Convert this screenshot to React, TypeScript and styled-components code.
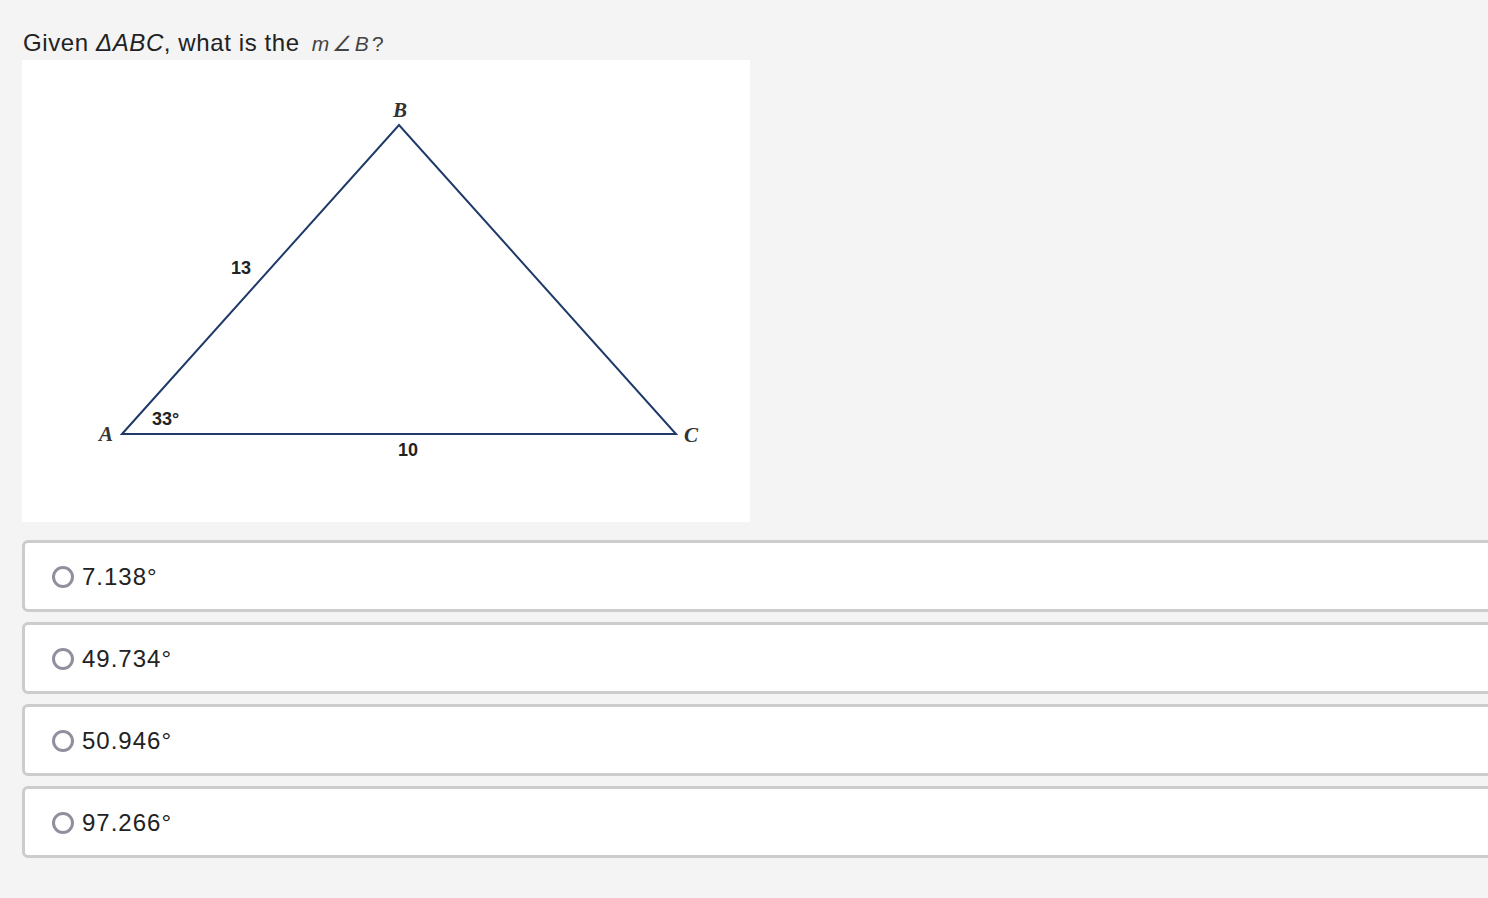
import React from "react";
import styled, { createGlobalStyle } from "styled-components";

const GlobalStyle = createGlobalStyle`
  html, body {
    margin: 0;
    padding: 0;
    background: #f4f4f4;
    overflow: hidden;
  }
  body {
    font-family: "Liberation Sans", Arial, sans-serif;
    color: #222;
  }
`;

const Page = styled.main`
  padding: 26px 0 0 22px;
  display: flex;
  flex-direction: column;
`;

const Question = styled.p`
  margin: 0 0 0 1px;
  height: 34px;
  font-size: 24px;
  line-height: 34px;
  letter-spacing: 0.6px;
  color: #222;
  white-space: nowrap;
`;

const Math = styled.span`
  margin-left: 12px;
  font-size: 21px;
  letter-spacing: 3.3px;
  color: #444;
`;

const Figure = styled.div`
  width: 728px;
  height: 462px;
  background: #fff;
  margin-bottom: 18px;
`;

const Choices = styled.ul`
  list-style: none;
  margin: 0;
  padding: 0;
  display: flex;
  flex-direction: column;
  gap: 10px;
`;

const Choice = styled.li`
  width: 1500px;
  height: 66px;
  box-sizing: content-box;
  border: 3px solid #cccccc;
  border-radius: 6px;
  background: #fff;
  display: flex;
  align-items: center;
  padding-left: 27px;
  gap: 8px;
`;

const Radio = styled.span`
  width: 16px;
  height: 16px;
  border: 3px solid #8f8f9d;
  border-radius: 50%;
  flex-shrink: 0;
  margin-top: 2px;
`;

const ChoiceText = styled.span`
  font-size: 24px;
  letter-spacing: 1px;
  color: #222;
  margin-top: 2px;
`;

const Diagram: React.FC = () => (
  <svg width="728" height="462" viewBox="0 0 728 462">
    <polygon
      points="100,374 377,65 654,374"
      fill="none"
      stroke="#1f3a68"
      strokeWidth="2"
      strokeLinejoin="miter"
    />
    <g fontFamily="'Liberation Serif', serif" fontStyle="italic" fontWeight="bold" fontSize="21" fill="#333" textAnchor="middle">
      <text x="378" y="57">B</text>
      <text x="84" y="381">A</text>
      <text x="669" y="382">C</text>
    </g>
    <g fontFamily="'Liberation Sans', Arial, sans-serif" fontWeight="bold" fontSize="18" fill="#222">
      <text x="219" y="214" textAnchor="middle">13</text>
      <text x="130" y="365">33°</text>
      <text x="386" y="396" textAnchor="middle">10</text>
    </g>
  </svg>
);

const answers = ["7.138°", "49.734°", "50.946°", "97.266°"];

const App: React.FC = () => {
  return (
    <>
      <GlobalStyle />
      <Page>
        <Question>
          Given <i>ΔABC</i>, what is the
          <Math>
            <i>m∠B</i>?
          </Math>
        </Question>
        <Figure>
          <Diagram />
        </Figure>
        <Choices>
          {answers.map((a) => (
            <Choice key={a}>
              <Radio />
              <ChoiceText>{a}</ChoiceText>
            </Choice>
          ))}
        </Choices>
      </Page>
    </>
  );
};

export default App;
